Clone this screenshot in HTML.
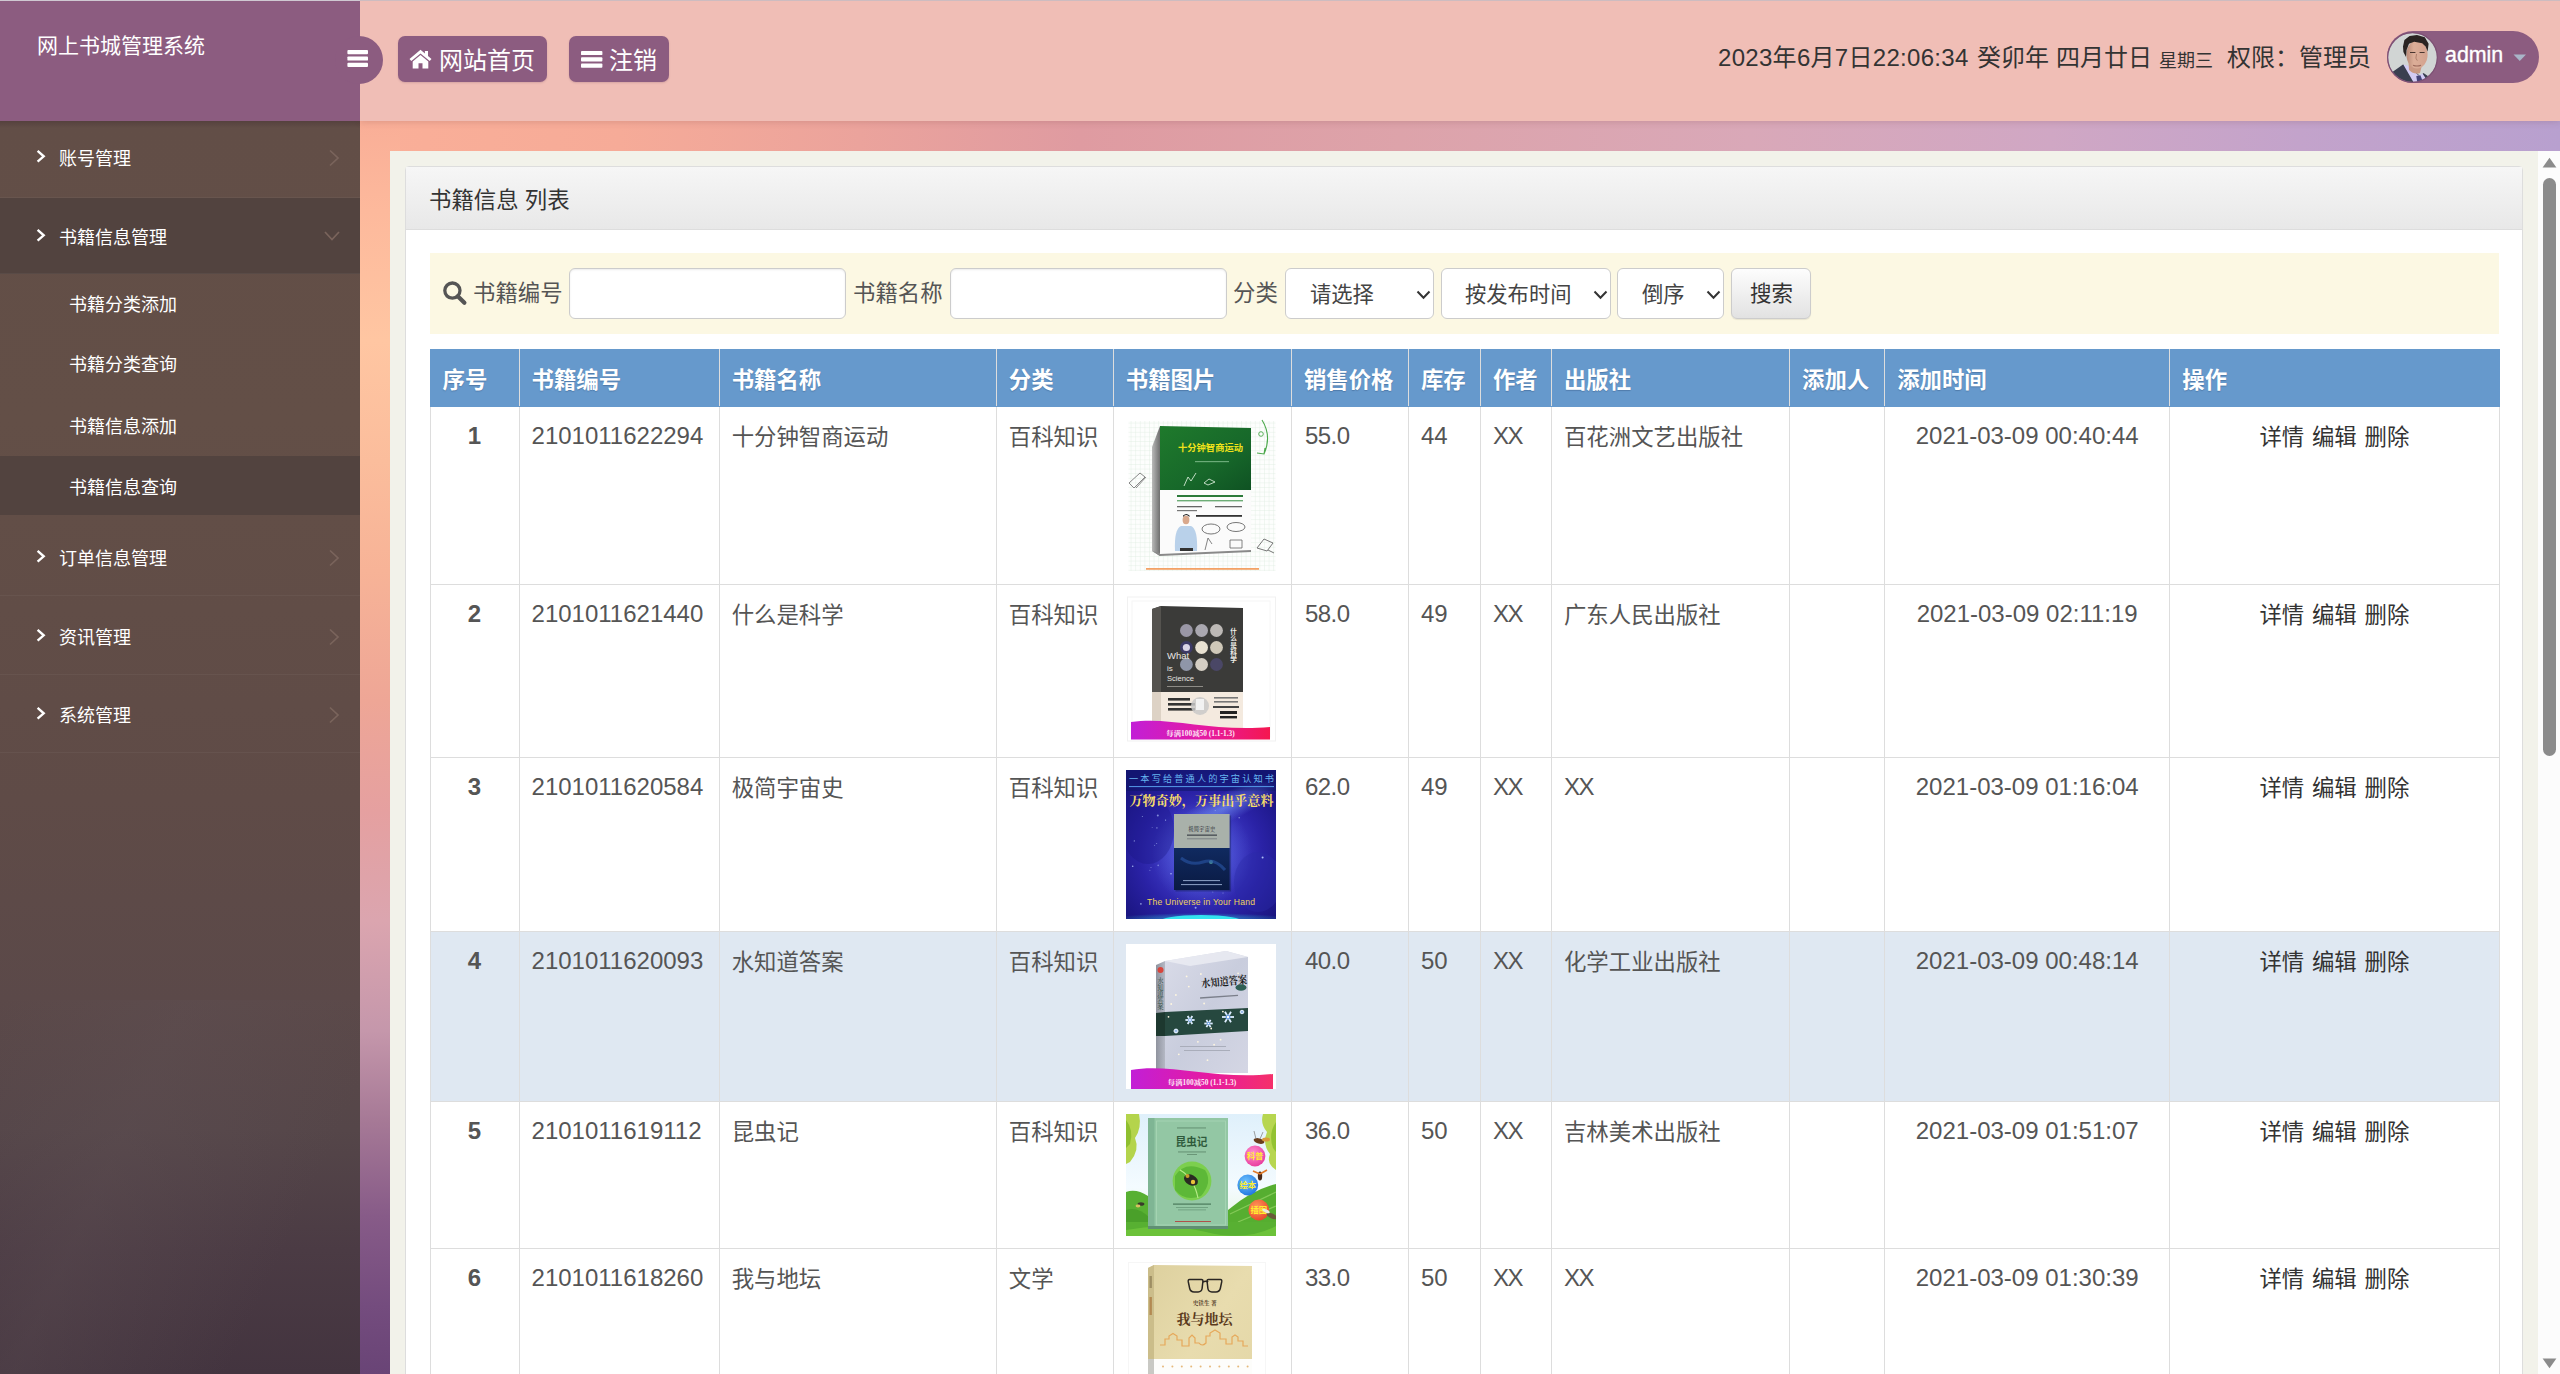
<!DOCTYPE html>
<html lang="zh-CN">
<head>
<meta charset="utf-8">
<title>网上书城管理系统</title>
<style>
*{box-sizing:border-box;margin:0;padding:0}
html,body{width:2560px;height:1374px;overflow:hidden}
body{position:relative;font-family:"Liberation Sans","Noto Sans CJK SC",sans-serif;color:#555;
background:#f4b49c;}
#bg{position:absolute;left:0;top:0;width:2560px;height:1374px;
background:linear-gradient(90deg,#faaf98 360px,#f6ab98 620px,#eba39c 860px,#df9ba1 1080px,#dda3aa 1400px,#d9a8b8 1750px,#d0a7c4 2050px,#c3a3cb 2300px,#b8a0cf 2560px);}
#bgv{position:absolute;left:0;top:121px;width:400px;height:1253px;
background:linear-gradient(180deg,#f9ae97 0px,#fdb99c 90px,#ffc6a2 220px,#fbbd9c 340px,#f7b397 450px,#eea696 580px,#e5a0a0 690px,#dba5af 800px,#c597ab 910px,#a67996 1000px,#875b88 1095px,#744c7e 1185px,#694476 1253px);}
/* sidebar */
#side{position:absolute;left:0;top:0;width:360px;height:1374px;
background:linear-gradient(180deg,#624e47 121px,#634f47 420px,#5f4b47 800px,#5b4949 1000px,#554649 1130px,#4b3b44 1250px,#43343f 1374px);}
#side:after{content:"";position:absolute;left:0;top:1000px;width:360px;height:374px;
background:linear-gradient(115deg,rgba(95,80,84,.0) 0%,rgba(95,80,84,.35) 35%,rgba(60,45,58,0) 75%);}
#brand{position:absolute;left:0;top:0;width:360px;height:121px;background:#8c5c80;color:#fff;font-size:21px;z-index:2}
#brand span{position:absolute;left:37px;top:30px;line-height:32px;white-space:nowrap}
#brandshadow{position:absolute;left:0;top:121px;width:360px;height:7px;background:linear-gradient(180deg,rgba(40,20,30,.22),rgba(40,20,30,0));z-index:2}
.mi{position:absolute;left:0;width:360px;color:#fff;font-size:18px;z-index:1}
.mi .t{position:absolute;left:59px;top:0;white-space:nowrap}
.mi.top{height:77px;border-bottom:1px solid rgba(255,255,255,.045)}
.mi.top .t{top:23px;line-height:26px}
.mi.act{background:#52433f}
.mi.sub .t{left:69px}
.mi svg{position:absolute}
/* header */
#hdr{position:absolute;left:360px;top:0;width:2200px;height:121px;background:#f0beb6;
box-shadow:0 2px 6px rgba(120,60,60,.16)}
#topline{position:absolute;left:0;top:0;width:2560px;height:1px;background:linear-gradient(90deg,#cfc8d2 360px,#cdbcc0 360px);z-index:5}
#tog{position:absolute;left:335px;top:36px;width:48px;height:48px;border-radius:24px;background:#8c5c80;z-index:3}
.btn{position:absolute;top:36px;height:46px;border-radius:7px;background:#8c5c80;color:#fff;font-size:25.6px;z-index:3;
box-shadow:0 1px 2px rgba(90,40,70,.18)}
.btn span{position:absolute;top:7px;line-height:36px;white-space:nowrap}
#htxt{position:absolute;left:1718px;top:38px;line-height:40px;font-size:24px;color:#333;white-space:nowrap;z-index:3}
#htxt small{font-size:18px}
#pill{position:absolute;left:2387px;top:31px;width:152px;height:52px;border-radius:26px;background:#8c5c80;z-index:3;color:#fff;font-size:21.4px}
#pill span{position:absolute;left:58px;top:8px;line-height:32px;-webkit-text-stroke:.35px #fff}
/* content */
#outer{position:absolute;left:390px;top:151px;width:2148px;height:1223px;background:#f2f2ea}
#sbar{position:absolute;left:2538px;top:151px;width:22px;height:1223px;background:#fcfcfc}
#thumb{position:absolute;left:5px;top:27px;width:13px;height:578px;border-radius:6.5px;background:#8b8b8b}
#panel{position:absolute;left:405px;top:166px;width:2118px;height:1240px;background:#fff;border:1px solid #ddd;border-radius:4px 4px 0 0}
#phead{position:absolute;left:0;top:0;width:2116px;height:63px;background:linear-gradient(180deg,#f6f6f6,#e8e8e8);border-bottom:1px solid #ddd;
font-size:22.4px;color:#333}
#phead span{position:absolute;left:23px;top:18px;line-height:32px}
#search{position:absolute;left:430px;top:253px;width:2069px;height:81px;background:#fcf8e3;border-radius:0;font-size:22.4px;color:#555}
#search .lb{position:absolute;top:24.5px;line-height:32px;white-space:nowrap}
.inp{position:absolute;top:15px;height:51px;background:#fff;border:1px solid #ccc;border-radius:6px;box-shadow:inset 0 1px 2px rgba(0,0,0,.075)}
.sel{position:absolute;top:15px;height:51px;background:#fff;border:1px solid #ccc;border-radius:6px;font-size:21.3px;color:#444}
.sel span{position:absolute;top:11px;line-height:30px;white-space:nowrap}
.sel svg{position:absolute;top:19.5px}
#sbtn{position:absolute;left:1301px;top:15px;width:80px;height:50.5px;border:1px solid #ccc;border-radius:6px;
background:linear-gradient(180deg,#fdfdfd,#e2e2e2);font-size:21.5px;color:#333;box-shadow:0 1px 1px rgba(0,0,0,.08)}
#sbtn span{position:absolute;left:18px;top:9px;line-height:32px}
/* table */
table{position:absolute;left:429.5px;top:349px;width:2070px;border-collapse:collapse;table-layout:fixed;font-size:22.4px;background:#fff}
th,td{border:1px solid #ddd;padding:0 0 0 12px;vertical-align:top;text-align:left;white-space:nowrap;overflow:hidden}
th{height:57px;background:#6699cc;color:#fff;font-weight:bold;line-height:32px;padding-top:15px;border-top-color:#6699cc;border-bottom-color:#6699cc;
text-shadow:0 1px 1px rgba(40,70,110,.35);font-size:22.4px}
th:first-child{border-left-color:#6699cc}th:last-child{border-right-color:#6699cc}
td{line-height:32px;padding-top:14.5px;color:#555}
td.c{text-align:center;padding-left:0}
td.b{font-weight:bold}
td.n{font-size:24px;padding-top:13px}
td.op{color:#333;text-align:center;padding-left:0;word-spacing:1.6px}
td.x{letter-spacing:-1.4px}
td.p{letter-spacing:-.5px;padding-left:13px}
tr.hl td{background:#dfe8f2}
td.im{padding-top:0;position:relative}
.cv{position:absolute;left:12.7px;display:block}
</style>
</head>
<body>
<div id="bg"></div>
<div id="bgv"></div>
<div id="topline"></div>

<!-- SIDEBAR -->
<div id="side"></div>
<div id="brand"><span>网上书城管理系统</span></div>
<div id="brandshadow"></div>
<div class="mi top" style="top:121px;height:77px"><span class="t" style="top:24.5px">账号管理</span><svg style="left:35px;top:26px" width="14" height="18" viewBox="0 0 14 18"><polyline points="2.6,3.9 8.7,9.3 2.6,14.7" fill="none" stroke="#fff" stroke-width="2.4" stroke-linejoin="miter"/></svg><svg style="left:326px;top:27px" width="16" height="20" viewBox="0 0 16 20"><polyline points="4,2.5 12,10 4,17.5" fill="none" stroke="#7a645c" stroke-width="1.7"/></svg></div>
<div class="mi top act" style="top:198px;height:76px"><span class="t" style="top:26.5px">书籍信息管理</span><svg style="left:35px;top:28px" width="14" height="18" viewBox="0 0 14 18"><polyline points="2.6,3.9 8.7,9.3 2.6,14.7" fill="none" stroke="#fff" stroke-width="2.4" stroke-linejoin="miter"/></svg><svg style="left:322px;top:31px" width="20" height="14" viewBox="0 0 20 14"><polyline points="3,3 10,10.5 17,3" fill="none" stroke="#7a645c" stroke-width="1.7"/></svg></div>
<div class="mi top" style="top:517px;height:79px"><span class="t" style="top:28.5px">订单信息管理</span><svg style="left:35px;top:30px" width="14" height="18" viewBox="0 0 14 18"><polyline points="2.6,3.9 8.7,9.3 2.6,14.7" fill="none" stroke="#fff" stroke-width="2.4" stroke-linejoin="miter"/></svg><svg style="left:326px;top:31px" width="16" height="20" viewBox="0 0 16 20"><polyline points="4,2.5 12,10 4,17.5" fill="none" stroke="#7a645c" stroke-width="1.7"/></svg></div>
<div class="mi top" style="top:596px;height:79px"><span class="t" style="top:28.5px">资讯管理</span><svg style="left:35px;top:30px" width="14" height="18" viewBox="0 0 14 18"><polyline points="2.6,3.9 8.7,9.3 2.6,14.7" fill="none" stroke="#fff" stroke-width="2.4" stroke-linejoin="miter"/></svg><svg style="left:326px;top:31px" width="16" height="20" viewBox="0 0 16 20"><polyline points="4,2.5 12,10 4,17.5" fill="none" stroke="#7a645c" stroke-width="1.7"/></svg></div>
<div class="mi top" style="top:675px;height:78px"><span class="t" style="top:27.5px">系统管理</span><svg style="left:35px;top:29px" width="14" height="18" viewBox="0 0 14 18"><polyline points="2.6,3.9 8.7,9.3 2.6,14.7" fill="none" stroke="#fff" stroke-width="2.4" stroke-linejoin="miter"/></svg><svg style="left:326px;top:30px" width="16" height="20" viewBox="0 0 16 20"><polyline points="4,2.5 12,10 4,17.5" fill="none" stroke="#7a645c" stroke-width="1.7"/></svg></div>
<div class="mi sub" style="top:274px;height:61px"><span class="t" style="top:17.5px;line-height:26px">书籍分类添加</span></div>
<div class="mi sub" style="top:335px;height:61px"><span class="t" style="top:16.5px;line-height:26px">书籍分类查询</span></div>
<div class="mi sub" style="top:396px;height:61px"><span class="t" style="top:17.5px;line-height:26px">书籍信息添加</span></div>
<div class="mi sub act" style="top:456px;height:59px"><span class="t" style="top:18.5px;line-height:26px">书籍信息查询</span></div>

<!-- HEADER -->
<div id="hdr"></div>

<div id="tog"><svg style="position:absolute;left:12px;top:14px" width="22" height="20" viewBox="0 0 22 20"><g fill="#fff"><rect x="0.4" y="0" width="20.6" height="4.2" rx=".9"/><rect x="0.4" y="6.4" width="20.6" height="4.2" rx=".9"/><rect x="0.4" y="12.8" width="20.6" height="4.2" rx=".9"/></g></svg></div>
<div class="btn" style="left:398px;width:149px"><svg style="position:absolute;left:11px;top:13px" width="23" height="20" viewBox="0 0 23 20"><path fill="#fff" d="M11.5 0.7 L0.5 10 L2.3 12.1 L11.5 4.4 L20.7 12.1 L22.5 10 L19 7 V1.9 H15.9 V4.4 Z M3.7 12.6 L11.5 6 L19.3 12.6 V19.4 H13.5 V14.2 H9.5 V19.4 H3.7 Z"/></svg><span style="left:41px;font-size:24px">网站首页</span></div>
<div class="btn" style="left:569px;width:100px"><svg style="position:absolute;left:11.5px;top:14.5px" width="22" height="18" viewBox="0 0 22 18"><g fill="#fff"><rect x="0" y="0" width="21.4" height="4.1" rx=".9"/><rect x="0" y="6.3" width="21.4" height="4.1" rx=".9"/><rect x="0" y="12.6" width="21.4" height="4.1" rx=".9"/></g></svg><span style="left:40px;font-size:24px">注销</span></div>
<div id="htxt"><span style="position:absolute;left:0;top:0;letter-spacing:.3px">2023年6月7日22:06:34</span><span style="position:absolute;left:259px;top:0">癸卯年</span><span style="position:absolute;left:338px;top:0">四月廿日</span><small style="position:absolute;left:441px;top:3px">星期三</small><span style="position:absolute;left:509px;top:0">权限：管理员</span></div>
<div id="pill"><svg style="position:absolute;left:0;top:0.5px" width="51" height="51" viewBox="0 0 51 51"><defs><clipPath id="avc"><circle cx="25.5" cy="25.5" r="24.6"/></clipPath><linearGradient id="avf" x1="0" x2="1"><stop offset="0" stop-color="#b98a78"/><stop offset=".35" stop-color="#dcae98"/><stop offset="1" stop-color="#d3a28e"/></linearGradient></defs><g clip-path="url(#avc)"><rect width="51" height="51" fill="#d1d5d4"/><path d="M4 41 L16 32.5 L24 36 L33 44 L36.5 41 L43 45.5 L40 52 H2 Z" fill="#3a3f50"/><path d="M16.3 32.4 L22 34 L31.5 43.5 L35.5 41.5 L38.5 46 L36 52 H27.5 Z" fill="#d2cbf4"/><path d="M29.3 44 L33.4 43.2 L36 50 L30.5 52 Z" fill="#46447a"/><path d="M21.5 30 L22 38 Q27 43 33 41 L35 33 Z" fill="#c99984"/><ellipse cx="30" cy="22.6" rx="10.6" ry="14" fill="url(#avf)"/><path d="M16 14.5 L17.4 8 L22.6 4 L30 3 L37.8 5.2 L41.6 11.8 L40.6 19.5 L38.6 14.5 L35.2 11.2 L27.2 9.8 L22 11.8 L19.6 18 L19 25 L16.4 20 Z" fill="#2a2422"/><path d="M23 20.5 h5.4 M32.6 20.5 h5" stroke="#4a3630" stroke-width="1.2"/><path d="M29.5 22 q-1.6 5 .8 6.6" stroke="#b07f6c" stroke-width="1" fill="none"/><path d="M26 33.2 q4 1.6 8 0" stroke="#9c6a5c" stroke-width="1.1" fill="none"/></g><circle cx="25.5" cy="25.5" r="24.8" fill="none" stroke="#7d5074" stroke-width="1.2"/></svg><span>admin</span><svg style="position:absolute;left:126px;top:23px" width="14" height="8" viewBox="0 0 14 8"><path d="M0.5 0.5 H13 L6.75 7 Z" fill="#a9b5c8"/></svg></div>


<!-- CONTENT -->
<div id="outer"></div>
<div id="sbar"><div id="thumb"></div><svg style="position:absolute;left:4px;top:6px" width="15" height="11" viewBox="0 0 15 11"><path d="M7.5 0.8 L14.4 10.6 H0.6 Z" fill="#8b8b8b"/></svg><svg style="position:absolute;left:4px;top:1207px" width="15" height="11" viewBox="0 0 15 11"><path d="M7.5 10.2 L14.4 0.4 H0.6 Z" fill="#8b8b8b"/></svg></div>
<div id="panel"><div id="phead"><span>书籍信息 列表</span></div></div>

<div id="search">
<svg style="position:absolute;left:12px;top:27px" width="26" height="26" viewBox="0 0 26 26"><circle cx="10.4" cy="10.6" r="7.6" fill="none" stroke="#555" stroke-width="3.3"/><path d="M15.8 16.2 L22.4 22.8" stroke="#555" stroke-width="4.2" stroke-linecap="round"/></svg>
<span class="lb" style="left:43px">书籍编号</span>
<div class="inp" style="left:139px;width:277px"></div>
<span class="lb" style="left:423px">书籍名称</span>
<div class="inp" style="left:520px;width:277px"></div>
<span class="lb" style="left:803px">分类</span>
<div class="sel" style="left:855px;width:149px"><span style="left:24px">请选择</span><svg style="left:130px" width="15" height="12" viewBox="0 0 15 12"><polyline points="1.5,2.5 7.5,8.8 13.5,2.5" fill="none" stroke="#333" stroke-width="2"/></svg></div>
<div class="sel" style="left:1011px;width:170px"><span style="left:23px">按发布时间</span><svg style="left:151px" width="15" height="12" viewBox="0 0 15 12"><polyline points="1.5,2.5 7.5,8.8 13.5,2.5" fill="none" stroke="#333" stroke-width="2"/></svg></div>
<div class="sel" style="left:1187px;width:107px"><span style="left:24px">倒序</span><svg style="left:88px" width="15" height="12" viewBox="0 0 15 12"><polyline points="1.5,2.5 7.5,8.8 13.5,2.5" fill="none" stroke="#333" stroke-width="2"/></svg></div>
<div id="sbtn"><span>搜索</span></div>
</div>

<table><colgroup><col style="width:89px"><col style="width:200px"><col style="width:277px"><col style="width:117px"><col style="width:178px"><col style="width:117px"><col style="width:72px"><col style="width:71px"><col style="width:238px"><col style="width:95px"><col style="width:285px"><col style="width:329px"></colgroup>
<thead><tr><th>序号</th><th>书籍编号</th><th>书籍名称</th><th>分类</th><th>书籍图片</th><th>销售价格</th><th>库存</th><th>作者</th><th>出版社</th><th>添加人</th><th>添加时间</th><th>操作</th></tr></thead><tbody>
<tr style="height:178px"><td class="c b n">1</td><td class="n">2101011622294</td><td>十分钟智商运动</td><td>百科知识</td><td class="im"><!--IMG1--><svg class="cv" style="top:11px" width="150" height="154" viewBox="0 0 150 154" ><defs><pattern id="gr1" width="4.6" height="4.6" patternUnits="userSpaceOnUse"><path d="M4.6 0H0V4.6" fill="none" stroke="#dfeee2" stroke-width=".8"/></pattern><linearGradient id="g1c" x1="0" y1="0" x2="1" y2="1"><stop offset="0" stop-color="#1f7a2c"/><stop offset=".6" stop-color="#17682a"/><stop offset="1" stop-color="#0f5223"/></linearGradient><linearGradient id="g1s" x1="0" x2="1"><stop offset="0" stop-color="#b9b9b9"/><stop offset="1" stop-color="#6f6f6f"/></linearGradient></defs><rect x="2.5" y="3" width="147" height="150" fill="#fdfefd"/><rect x="2.5" y="3" width="147" height="150" fill="url(#gr1)"/><polygon points="26.0,29.0 34.0,8.0 34.0,138.0 26.0,133.0" fill="url(#g1s)"/><polygon points="26.0,133.0 34.0,138.0 125.0,134.0 125.0,131.0 34.0,135.0" fill="#8a8a8a"/><polygon points="34.0,8.0 125.0,10.0 125.0,72.0 34.0,72.0" fill="url(#g1c)"/><polygon points="34.0,72.0 125.0,72.0 125.0,132.0 34.0,136.0" fill="#fbfbfb"/><text x="52" y="33" font-size="9.6" font-weight="bold" fill="#f0e21a" font-family="Liberation Sans, Noto Sans CJK SC, sans-serif" textLength="65" lengthAdjust="spacingAndGlyphs">十分钟智商运动</text><rect x="69" y="43" width="34" height="1.2" fill="#8fc79a" opacity=".7"/><path d="M58.0,68.0 l4,-9 l3,4 l5,-8 m8,10 l5,-4 l6,3 l-7,3 z" fill="none" stroke="#dcefdc" stroke-width="1" opacity=".85"/><rect x="51" y="77" width="66" height="2" fill="#2c7a3a"/><rect x="51" y="82" width="66" height="1.4" fill="#4a9a55" opacity=".8"/><rect x="51" y="88" width="25" height="1.3" fill="#666"/><rect x="89" y="88" width="27" height="1.3" fill="#666"/><rect x="51" y="92" width="20" height="1.2" fill="#777"/><rect x="70" y="97" width="46" height="1.8" fill="#333"/><ellipse cx="60" cy="102" rx="3.4" ry="4.2" fill="#d9a88c"/><path d="M57.0,99.0 q3,-4 6.5,0 v-1.5 q-3,-3 -6.5,0z" fill="#222"/><path d="M49.0,133.0 q-1,-22 6,-25 h10 q7,3 6,25 z" fill="#b9d1ea"/><rect x="54" y="130" width="13" height="3" fill="#333"/><ellipse cx="85" cy="111" rx="9" ry="5" fill="none" stroke="#555" stroke-width=".8"/><ellipse cx="110" cy="109" rx="9" ry="4.5" fill="none" stroke="#555" stroke-width=".8"/><path d="M79.0,132.0 l3,-12 l4,6 m18,4 h12 v-8 h-12z" fill="none" stroke="#666" stroke-width=".8"/><path d="M3.0,65.0 l11,-10 l5,4 l-11,11 z M10.0,70.0 l10,-11" fill="none" stroke="#888" stroke-width="1"/><path d="M131.0,130.0 l7,-9 l9,4 l-6,8 z M142.0,132.0 l6,3" fill="none" stroke="#777" stroke-width="1"/><path d="M136.0,2.0 q10,16 2,34 l-7,-1 m7,1 l1,-6" fill="none" stroke="#4aa84a" stroke-width="1.1"/><circle cx="135" cy="16" r="2.3" fill="none" stroke="#4aa84a" stroke-width=".9"/><rect x="20" y="150" width="113" height="1.8" fill="#f3a266"/></svg><!--/IMG1--></td><td class="n p">55.0</td><td class="n">44</td><td class="n x">XX</td><td>百花洲文艺出版社</td><td></td><td class="c n">2021-03-09 00:40:44</td><td class="op">详情 编辑 删除</td></tr>
<tr style="height:173px"><td class="c b n">2</td><td class="n">2101011621440</td><td>什么是科学</td><td>百科知识</td><td class="im"><!--IMG2--><svg class="cv" style="top:11px" width="150" height="146" viewBox="0 0 150 146" ><defs><linearGradient id="g2b" x1="0" x2="1"><stop offset="0" stop-color="#c21fd6"/><stop offset=".55" stop-color="#e61aa0"/><stop offset="1" stop-color="#f5174f"/></linearGradient></defs><rect x="1" y="0.5" width="149" height="145" fill="#fff"/><rect x="1.5" y="1" width="148" height="144" fill="none" stroke="#f1f1f1" stroke-width="1"/><rect x="6" y="5" width="138" height="136" fill="none" stroke="#f6f6f6" stroke-width="1"/><polygon points="26.0,13.0 35.0,10.0 117.0,12.0 117.0,96.0 26.0,96.0" fill="#3b3b39"/><polygon points="26.0,13.0 35.0,10.0 35.0,96.0 26.0,96.0" fill="#55534f"/><rect x="26" y="96" width="91" height="36" fill="#f4eadf"/><rect x="26" y="96" width="9" height="36" fill="#ddd2c5"/><circle cx="60.4" cy="34.5" r="6.4" fill="#9a97a6"/><circle cx="75.6" cy="34.5" r="6.4" fill="#aaa8b0"/><circle cx="90.5" cy="34.5" r="6.4" fill="#bdb9b6"/><circle cx="60.4" cy="51.5" r="6.4" fill="#3d3a66"/><circle cx="75.6" cy="51.5" r="6.4" fill="#e9e2d2"/><circle cx="90.5" cy="51.5" r="6.4" fill="#cfc8b8"/><circle cx="60.4" cy="68.5" r="6.4" fill="#8f96a8"/><circle cx="75.6" cy="68.5" r="6.4" fill="#d5cfc4"/><circle cx="90.5" cy="68.5" r="6.4" fill="#4a4766"/><circle cx="60.4" cy="51.5" r="3.6" fill="#d9d4e6"/><text x="41" y="63" font-size="9.5" fill="#e8e6e2" font-family="Liberation Sans, Noto Sans CJK SC, sans-serif">What</text><text x="41" y="75" font-size="8" fill="#e8e6e2" font-family="Liberation Sans, Noto Sans CJK SC, sans-serif">is</text><text x="41" y="84.5" font-size="7.6" fill="#e8e6e2" font-family="Liberation Sans, Noto Sans CJK SC, sans-serif">Science</text><text font-size="6.6" font-weight="bold" fill="#f0eee8" font-family="Liberation Sans, Noto Sans CJK SC, sans-serif"><tspan x="104.3" y="38.0">什</tspan><tspan x="104.3" y="45.0">么</tspan><tspan x="104.3" y="52.0">是</tspan><tspan x="104.3" y="59.0">科</tspan><tspan x="104.3" y="66.0">学</tspan></text><rect x="41" y="90" width="36" height="1" fill="#8d8b86"/><rect x="42" y="102" width="22" height="2.6" fill="#333"/><rect x="42" y="107" width="27" height="2.6" fill="#333"/><rect x="42" y="112" width="27" height="2.6" fill="#333"/><circle cx="74" cy="110" r="9" fill="#c9c9c9" opacity=".85"/><rect x="70" y="103" width="8" height="11" fill="#f2f2f2"/><rect x="88" y="101" width="24" height="1.6" fill="#777"/><rect x="88" y="105" width="24" height="1.6" fill="#777"/><rect x="87" y="110" width="26" height="2" fill="#444"/><rect x="94" y="115" width="17" height="3" fill="#222"/><rect x="94" y="120" width="17" height="2.4" fill="#222"/><path d="M5.0,126.0 C44.0,120.0 84.0,136.0 144.0,131.0 L144.0,143.5 L5.0,143.5 Z" fill="url(#g2b)"/><text x="74.5" y="140.29999999999995" font-size="7.4" font-weight="bold" fill="#ffe9f6" text-anchor="middle" font-family="Liberation Serif, Noto Serif CJK SC, serif">每满100减50 (1.1-1.3)</text></svg><!--/IMG2--></td><td class="n p">58.0</td><td class="n">49</td><td class="n x">XX</td><td>广东人民出版社</td><td></td><td class="c n">2021-03-09 02:11:19</td><td class="op">详情 编辑 删除</td></tr>
<tr style="height:174px"><td class="c b n">3</td><td class="n">2101011620584</td><td>极简宇宙史</td><td>百科知识</td><td class="im"><!--IMG3--><svg class="cv" style="top:12px" width="150" height="149" viewBox="0 0 150 149" ><defs><radialGradient id="g3a" cx=".5" cy=".56" r=".66"><stop offset="0" stop-color="#5560de"/><stop offset=".3" stop-color="#3f3cc8"/><stop offset=".62" stop-color="#2a22a6"/><stop offset="1" stop-color="#19147e"/></radialGradient><linearGradient id="g3b" x1="0" y1="0" x2="0" y2="1"><stop offset="0" stop-color="#102a60"/><stop offset="1" stop-color="#0a1a42"/></linearGradient><radialGradient id="g3c" cx=".5" cy="1" r=".6"><stop offset="0" stop-color="#35e6f0"/><stop offset="1" stop-color="#35e6f0" stop-opacity="0"/></radialGradient><radialGradient id="g3d" cx=".5" cy=".5" r=".5"><stop offset="0" stop-color="#6f8cf0" stop-opacity=".75"/><stop offset="1" stop-color="#6f8cf0" stop-opacity="0"/></radialGradient></defs><rect width="150" height="149" fill="url(#g3a)"/><rect width="150" height="21" fill="#0f1668" opacity=".55"/><ellipse cx="98" cy="38" rx="58" ry="15" fill="url(#g3d)" transform="rotate(-24 98 38)"/><ellipse cx="76" cy="84" rx="50" ry="52" fill="url(#g3d)" opacity=".7"/><ellipse cx="22" cy="60" rx="26" ry="34" fill="#1a1684" opacity=".35"/><ellipse cx="132" cy="112" rx="24" ry="30" fill="#2b2aa8" opacity=".4"/><circle cx="37.0" cy="34.0" r="1.0" fill="#bcd0ff" opacity="0.64"/><circle cx="16.0" cy="24.3" r="0.8" fill="#bcd0ff" opacity="0.80"/><circle cx="113.2" cy="47.7" r="0.8" fill="#bcd0ff" opacity="0.54"/><circle cx="27.9" cy="34.3" r="0.6" fill="#bcd0ff" opacity="0.87"/><circle cx="6.7" cy="96.3" r="0.8" fill="#bcd0ff" opacity="0.80"/><circle cx="30.9" cy="57.9" r="0.8" fill="#bcd0ff" opacity="0.44"/><circle cx="90.2" cy="99.9" r="0.6" fill="#bcd0ff" opacity="0.49"/><circle cx="71.2" cy="32.4" r="0.8" fill="#bcd0ff" opacity="0.40"/><circle cx="45.0" cy="103.8" r="0.8" fill="#bcd0ff" opacity="0.82"/><circle cx="76.2" cy="70.0" r="0.8" fill="#bcd0ff" opacity="0.62"/><circle cx="26.2" cy="57.4" r="0.5" fill="#bcd0ff" opacity="0.44"/><circle cx="69.6" cy="137.7" r="1.0" fill="#bcd0ff" opacity="0.75"/><circle cx="23.9" cy="100.2" r="0.5" fill="#bcd0ff" opacity="0.61"/><circle cx="32.2" cy="95.4" r="0.8" fill="#bcd0ff" opacity="0.49"/><circle cx="65.8" cy="90.3" r="0.6" fill="#bcd0ff" opacity="0.85"/><circle cx="17.5" cy="29.1" r="0.6" fill="#bcd0ff" opacity="0.54"/><circle cx="86.8" cy="122.0" r="0.5" fill="#bcd0ff" opacity="0.57"/><circle cx="28.6" cy="75.2" r="0.5" fill="#bcd0ff" opacity="0.58"/><circle cx="14.9" cy="133.9" r="0.8" fill="#bcd0ff" opacity="0.77"/><circle cx="141.2" cy="24.1" r="0.8" fill="#bcd0ff" opacity="0.56"/><circle cx="25.0" cy="97.6" r="0.5" fill="#bcd0ff" opacity="0.55"/><circle cx="30.6" cy="73.5" r="0.6" fill="#bcd0ff" opacity="0.53"/><circle cx="89.2" cy="40.4" r="0.5" fill="#bcd0ff" opacity="0.58"/><circle cx="68.5" cy="64.4" r="0.8" fill="#bcd0ff" opacity="0.90"/><circle cx="85.3" cy="73.0" r="0.6" fill="#bcd0ff" opacity="0.61"/><circle cx="32.9" cy="28.9" r="0.5" fill="#bcd0ff" opacity="0.77"/><circle cx="88.8" cy="134.6" r="0.5" fill="#bcd0ff" opacity="0.67"/><circle cx="86.9" cy="59.3" r="0.5" fill="#bcd0ff" opacity="0.46"/><circle cx="79.2" cy="111.8" r="1.0" fill="#bcd0ff" opacity="0.73"/><circle cx="31.8" cy="45.4" r="1.0" fill="#bcd0ff" opacity="0.61"/><circle cx="8.3" cy="70.9" r="0.6" fill="#bcd0ff" opacity="0.72"/><circle cx="64.6" cy="47.0" r="0.6" fill="#bcd0ff" opacity="0.42"/><circle cx="39.6" cy="50.1" r="0.6" fill="#bcd0ff" opacity="0.79"/><circle cx="63.1" cy="52.4" r="0.8" fill="#bcd0ff" opacity="0.43"/><circle cx="136.6" cy="87.6" r="1.0" fill="#bcd0ff" opacity="0.88"/><circle cx="97.0" cy="123.0" r="0.5" fill="#bcd0ff" opacity="0.65"/><circle cx="16.4" cy="46.5" r="0.6" fill="#bcd0ff" opacity="0.57"/><circle cx="97.6" cy="114.7" r="0.8" fill="#bcd0ff" opacity="0.81"/><text x="3" y="11.6" font-size="9.2" fill="#67b6f0" font-family="Liberation Sans, Noto Sans CJK SC, sans-serif" textLength="145" lengthAdjust="spacing">一本写给普通人的宇宙认知书</text><rect x="3" y="16" width="145" height="1.1" fill="#4f8fe0"/><text x="3.5" y="34.6" font-size="12.6" font-weight="bold" fill="#f6dc6a" font-family="Liberation Serif, Noto Serif CJK SC, serif" textLength="144" lengthAdjust="spacingAndGlyphs">万物奇妙，万事出乎意料</text><rect x="48" y="44" width="55.6" height="76" fill="#0a1738" opacity=".35" transform="translate(1.5,1.5)"/><rect x="48" y="44" width="55.6" height="34" fill="#a9b1aa"/><rect x="48" y="78" width="55.6" height="42" fill="url(#g3b)"/><text x="75.8" y="60.5" font-size="5.4" fill="#2c3038" text-anchor="middle" font-family="Liberation Serif, Noto Serif CJK SC, serif">极简宇宙史</text><rect x="61" y="64.5" width="30" height="1.3" fill="#454a50"/><rect x="61" y="68.5" width="30" height=".7" fill="#6a7076"/><circle cx="85" cy="92" r="2" fill="#5fb9b0" opacity=".7"/><path d="M55 88 q10 8 22 4 t22 8" fill="none" stroke="#2a57a6" stroke-width="3" opacity=".6"/><rect x="57" y="110" width="37" height="1.1" fill="#9fb4d8" opacity=".8"/><rect x="55" y="114" width="41" height="1.1" fill="#9fb4d8" opacity=".8"/><text x="75" y="135.2" font-size="8.6" fill="#f0d45a" text-anchor="middle" font-family="Liberation Sans, Noto Sans CJK SC, sans-serif" textLength="108" lengthAdjust="spacing">The Universe in Your Hand</text><ellipse cx="75" cy="153" rx="44" ry="8" fill="#33e0ee"/><rect y="139" width="150" height="10" fill="url(#g3c)" opacity=".6"/></svg><!--/IMG3--></td><td class="n p">62.0</td><td class="n">49</td><td class="n x">XX</td><td class="n x">XX</td><td></td><td class="c n">2021-03-09 01:16:04</td><td class="op">详情 编辑 删除</td></tr>
<tr class="hl" style="height:170px"><td class="c b n">4</td><td class="n">2101011620093</td><td>水知道答案</td><td>百科知识</td><td class="im"><!--IMG4--><svg class="cv" style="top:12px" width="150" height="145" viewBox="0 0 150 145" ><defs><linearGradient id="g4a" x1="0" y1="0" x2="1" y2="1"><stop offset="0" stop-color="#d9dbe8"/><stop offset=".5" stop-color="#c9cddd"/><stop offset="1" stop-color="#d4d6e4"/></linearGradient><linearGradient id="g4s" x1="0" x2="1"><stop offset="0" stop-color="#8f939e"/><stop offset="1" stop-color="#b4b8c4"/></linearGradient></defs><rect width="150" height="145" fill="#fff"/><polygon points="39.0,17.0 100.0,7.0 122.0,13.0 122.0,129.0 39.0,129.0" fill="url(#g4a)"/><polygon points="39.0,17.0 100.0,7.0 122.0,13.0 64.0,22.0" fill="#eceef4" opacity=".8"/><polygon points="30.0,21.0 39.0,17.0 39.0,129.0 30.0,129.0" fill="url(#g4s)"/><circle cx="34.5" cy="26" r="3" fill="#d8453c"/><text font-size="6.4" fill="#2c4a40" font-family="Liberation Serif, Noto Serif CJK SC, serif"><tspan x="31.3" y="39.0">水</tspan><tspan x="31.3" y="45.6">知</tspan><tspan x="31.3" y="52.2">道</tspan><tspan x="31.3" y="58.8">答</tspan><tspan x="31.3" y="65.4">案</tspan></text><polygon points="39.0,68.0 122.0,64.0 122.0,87.0 39.0,92.0" fill="#26483f"/><polygon points="30.0,69.0 39.0,68.0 39.0,92.0 30.0,92.0" fill="#1d382f"/><g transform="translate(64.0,76.0)" fill="#dfeeff"><rect x="-4.6" y="-0.9" width="9.2" height="1.8" transform="rotate(0)"/><rect x="-4.6" y="-0.9" width="9.2" height="1.8" transform="rotate(60)"/><rect x="-4.6" y="-0.9" width="9.2" height="1.8" transform="rotate(120)"/><circle r="1.9" fill="#6f9fe0"/><circle r="0.9" fill="#fff"/></g><g transform="translate(82.5,79.5)" fill="#dfeeff"><rect x="-4.2" y="-0.9" width="8.4" height="1.8" transform="rotate(0)"/><rect x="-4.2" y="-0.9" width="8.4" height="1.8" transform="rotate(60)"/><rect x="-4.2" y="-0.9" width="8.4" height="1.8" transform="rotate(120)"/><circle r="1.8" fill="#6f9fe0"/><circle r="0.8" fill="#fff"/></g><g transform="translate(102.0,73.0)" fill="#dfeeff"><rect x="-6" y="-0.9" width="12" height="1.8" transform="rotate(0)"/><rect x="-6" y="-0.9" width="12" height="1.8" transform="rotate(60)"/><rect x="-6" y="-0.9" width="12" height="1.8" transform="rotate(120)"/><circle r="2.5" fill="#6f9fe0"/><circle r="1.2" fill="#fff"/></g><g transform="translate(50.0,87.0)" fill="#dfeeff"><rect x="-2.4" y="-0.9" width="4.8" height="1.8" transform="rotate(0)"/><rect x="-2.4" y="-0.9" width="4.8" height="1.8" transform="rotate(60)"/><rect x="-2.4" y="-0.9" width="4.8" height="1.8" transform="rotate(120)"/><circle r="1.0" fill="#6f9fe0"/><circle r="0.5" fill="#fff"/></g><g transform="translate(116.0,68.0)" fill="#dfeeff"><rect x="-2.2" y="-0.9" width="4.4" height="1.8" transform="rotate(0)"/><rect x="-2.2" y="-0.9" width="4.4" height="1.8" transform="rotate(60)"/><rect x="-2.2" y="-0.9" width="4.4" height="1.8" transform="rotate(120)"/><circle r="0.9" fill="#6f9fe0"/><circle r="0.4" fill="#fff"/></g><text x="75" y="41.5" font-size="11" font-weight="bold" fill="#1c1c1c" font-family="Liberation Serif, Noto Serif CJK SC, serif" textLength="46" lengthAdjust="spacingAndGlyphs" transform="rotate(-5 98 36)">水知道答案</text><ellipse cx="115" cy="43.5" rx="5.5" ry="3.2" fill="#2f5f55"/><rect x="74" y="52" width="38" height="1.4" fill="#7b7f8a" transform="rotate(-4 93 52)"/><circle cx="78.1" cy="59.5" r=".9" fill="#fff7e0"/><circle cx="52.8" cy="110.3" r=".9" fill="#fff7e0"/><circle cx="42.5" cy="72.8" r=".9" fill="#fff7e0"/><circle cx="112.1" cy="29.3" r=".9" fill="#fff7e0"/><circle cx="85.2" cy="84.5" r=".9" fill="#fff7e0"/><circle cx="45.2" cy="60.0" r=".9" fill="#fff7e0"/><circle cx="96.9" cy="67.6" r=".9" fill="#fff7e0"/><circle cx="98.6" cy="37.2" r=".9" fill="#fff7e0"/><circle cx="60.6" cy="32.4" r=".9" fill="#fff7e0"/><circle cx="81.5" cy="116.2" r=".9" fill="#fff7e0"/><circle cx="88.1" cy="100.7" r=".9" fill="#fff7e0"/><circle cx="71.9" cy="97.8" r=".9" fill="#fff7e0"/><circle cx="49.9" cy="51.0" r=".9" fill="#fff7e0"/><circle cx="94.6" cy="95.7" r=".9" fill="#fff7e0"/><circle cx="74.9" cy="30.0" r=".9" fill="#fff7e0"/><circle cx="62.8" cy="42.6" r=".9" fill="#fff7e0"/><rect x="54" y="102" width="46" height="1" fill="#a9adba"/><rect x="58" y="106" width="46" height="1" fill="#a9adba"/><defs><linearGradient id="g4b" x1="0" x2="1"><stop offset="0" stop-color="#c21fd6"/><stop offset=".55" stop-color="#e61aa0"/><stop offset="1" stop-color="#f5306a"/></linearGradient></defs><path d="M5.0,126.0 C44.0,119.0 89.0,136.0 147.0,130.0 L147.0,145.0 L5.0,145.0 Z" fill="url(#g4b)"/><text x="76" y="141.4000000000001" font-size="7.4" font-weight="bold" fill="#ffe9f6" text-anchor="middle" font-family="Liberation Serif, Noto Serif CJK SC, serif">每满100减50 (1.1-1.3)</text></svg><!--/IMG4--></td><td class="n p">40.0</td><td class="n">50</td><td class="n x">XX</td><td>化学工业出版社</td><td></td><td class="c n">2021-03-09 00:48:14</td><td class="op">详情 编辑 删除</td></tr>
<tr style="height:147px"><td class="c b n">5</td><td class="n">2101011619112</td><td>昆虫记</td><td>百科知识</td><td class="im"><!--IMG5--><svg class="cv" style="top:12px" width="150" height="122" viewBox="0 0 150 122" ><defs><linearGradient id="g5s" x1="0" y1="0" x2="0" y2="1"><stop offset="0" stop-color="#dff0fb"/><stop offset=".6" stop-color="#f4fbff"/><stop offset="1" stop-color="#e6f5d8"/></linearGradient><radialGradient id="g5p" cx=".4" cy=".35" r=".7"><stop offset="0" stop-color="#ff8fd0"/><stop offset="1" stop-color="#e83a9c"/></radialGradient><radialGradient id="g5bl" cx=".4" cy=".35" r=".7"><stop offset="0" stop-color="#6fc4ff"/><stop offset="1" stop-color="#1f74e0"/></radialGradient><radialGradient id="g5r" cx=".4" cy=".35" r=".7"><stop offset="0" stop-color="#ff9a5a"/><stop offset="1" stop-color="#e8452a"/></radialGradient></defs><rect width="150" height="122" fill="url(#g5s)"/><path d="M0 0 H13 Q16 14 9 24 Q14 36 4 48 L0 50 Z" fill="#b4d44c"/><path d="M0 6 Q8 16 4 30 L0 34Z" fill="#8fbf2f"/><path d="M150 0 H137 Q134 10 141 18 Q136 30 144 40 Q140 50 150 56 Z" fill="#b7d650"/><path d="M150 8 Q142 20 147 34 L150 38Z" fill="#93c232"/><path d="M0 78 Q10 74 22 82 L22 122 H0Z" fill="#58b032"/><path d="M0 96 Q12 92 24 104 V122 H0Z" fill="#4aa02a"/><path d="M102 96 Q126 76 150 70 V122 H96 Z" fill="#56ae30"/><path d="M104 100 L150 78 M112 108 L150 92" stroke="#8fd060" stroke-width="1.3" fill="none" opacity=".8"/><rect x="0" y="108" width="150" height="14" fill="#58b032"/><path d="M0 116 Q40 108 80 118 T150 112 V122 H0Z" fill="#6cc23a"/><rect x="22" y="4" width="80" height="110" fill="#93c7a4"/><rect x="22" y="4" width="6.5" height="110" fill="#7fb594"/><rect x="30.5" y="7" width="69" height="104" fill="none" stroke="#a9d6b6" stroke-width=".8"/><rect x="22" y="112" width="80" height="3" fill="#5f8f72"/><text x="65.5" y="31.5" font-size="11.4" font-weight="bold" fill="#2f5a3c" text-anchor="middle" font-family="Liberation Sans, Noto Sans CJK SC, sans-serif" textLength="32" lengthAdjust="spacingAndGlyphs">昆虫记</text><rect x="51" y="13.5" width="29" height=".9" fill="#5f8a6c"/><rect x="52" y="37.5" width="28" height=".9" fill="#5f8a6c"/><rect x="61" y="40" width="10" height=".8" fill="#5f8a6c"/><circle cx="66" cy="67" r="19.4" fill="#7ccf4e"/><path d="M49.0,62.0 q10,-16 30,-6 q8,12 -4,26 q-16,6 -26,-6 z" fill="#5db838"/><path d="M54.0,56.0 q14,8 18,28" stroke="#b9ec8a" stroke-width="1.1" fill="none"/><ellipse cx="65" cy="66" rx="7.5" ry="5" fill="#2a2a22" transform="rotate(28 65 66)"/><circle cx="67" cy="68" r="2.2" fill="#e8c23a"/><circle cx="61.5" cy="62" r="2" fill="#c8a02a"/><rect x="47" y="89.5" width="38" height="1.2" fill="#4a7a5a"/><rect x="50" y="93" width="32" height=".8" fill="#6a9a7a"/><rect x="52" y="95.5" width="28" height=".8" fill="#6a9a7a"/><rect x="49" y="107" width="36" height="1" fill="#b0504a"/><circle cx="129.0" cy="42.0" r="10.4" fill="url(#g5p)"/><text x="129.0" y="45.1" font-size="8.4" font-weight="bold" fill="#ffee30" text-anchor="middle" font-family="Liberation Sans, Noto Sans CJK SC, sans-serif">科普</text><circle cx="121.8" cy="71.0" r="10.4" fill="url(#g5bl)"/><text x="121.8" y="74.1" font-size="8.4" font-weight="bold" fill="#ffee30" text-anchor="middle" font-family="Liberation Sans, Noto Sans CJK SC, sans-serif">绘本</text><circle cx="132.8" cy="96.0" r="10.4" fill="url(#g5r)"/><text x="132.8" y="99.1" font-size="8.4" font-weight="bold" fill="#ffee30" text-anchor="middle" font-family="Liberation Sans, Noto Sans CJK SC, sans-serif">插图</text><ellipse cx="133" cy="27" rx="5.5" ry="2.6" fill="#6a3d1c" transform="rotate(15 133 27)"/><ellipse cx="140" cy="25.5" rx="4" ry="2" fill="#d89a3a"/><path d="M130.0,25.0 l-2,-8 m6,8 l3,-7" stroke="#888" stroke-width=".8"/><ellipse cx="134" cy="62" rx="2.2" ry="4.6" fill="#4a2a1a"/><path d="M134.0,60.0 l7,-4 M134.0,60.0 l-7,-3" stroke="#e07a2a" stroke-width="1.6"/><ellipse cx="146" cy="102" rx="6" ry="2.4" fill="#6a5a3a" transform="rotate(25 146 102)"/><ellipse cx="140" cy="97" rx="4" ry="1.6" fill="#e8e8e0" transform="rotate(25 140 97)"/><ellipse cx="15" cy="90" rx="3.4" ry="1.8" fill="#3a3a2a"/><ellipse cx="12" cy="92" rx="2.4" ry="1.4" fill="#d8c060"/></svg><!--/IMG5--></td><td class="n p">36.0</td><td class="n">50</td><td class="n x">XX</td><td>吉林美术出版社</td><td></td><td class="c n">2021-03-09 01:51:07</td><td class="op">详情 编辑 删除</td></tr>
<tr style="height:160px"><td class="c b n">6</td><td class="n">2101011618260</td><td>我与地坛</td><td>文学</td><td class="im"><!--IMG6--><svg class="cv" style="top:13px" width="150" height="150" viewBox="0 0 150 150" ><defs><linearGradient id="g6a" x1="0" y1="0" x2="1" y2="1"><stop offset="0" stop-color="#ddd09e"/><stop offset=".5" stop-color="#e8dcae"/><stop offset="1" stop-color="#e3d6a6"/></linearGradient></defs><rect x="2" y="0" width="138" height="150" fill="#fff"/><rect x="2.5" y=".5" width="137" height="149" fill="none" stroke="#f6f6f6"/><polygon points="22.0,6.0 28.0,3.0 126.0,4.0 126.0,150.0 22.0,150.0" fill="url(#g6a)"/><polygon points="22.0,6.0 28.0,3.0 28.0,150.0 22.0,150.0" fill="#cbbd8a"/><rect x="23.5" y="14" width="2.4" height="12" fill="#8a7a52" opacity=".7"/><rect x="23.5" y="35" width="2.4" height="18" fill="#a8743a" opacity=".7"/><g fill="none" stroke="#2a2622" stroke-width="1.5"><path d="M63.5,17.5 h12 q1.6,0 1.4,2 l-.8,7 q-.5,3.4 -4,3.4 h-4 q-3.6,0 -4.4,-3.4 l-1.4,-6.6 q-.4,-2.4 1.2,-2.4z"/><path d="M82.5,17.5 h12 q1.6,0 1.2,2.4 l-1.4,6.6 q-.8,3.4 -4.4,3.4 h-4 q-3.5,0 -4,-3.4 l-.8,-7 q-.2,-2 1.4,-2z"/><path d="M77.0,20.0 q2.6,-1.6 5.2,0"/></g><text x="78.59999999999991" y="42.799999999999955" font-size="5.6" font-weight="bold" fill="#5a4630" text-anchor="middle" font-family="Liberation Serif, Noto Serif CJK SC, serif">史铁生 著</text><text x="78.59999999999991" y="62.299999999999955" font-size="14" font-weight="bold" fill="#5b3a1c" text-anchor="middle" font-family="Liberation Serif, Noto Serif CJK SC, serif" textLength="56" lengthAdjust="spacingAndGlyphs">我与地坛</text><path d="M34.0,83.0 h5 v-6 h4 v-3 l4,-2.5 l4,2.5 v4 h5 v6 h7 v-8 l3,-3 l3,3 v5 h4 q3,4 7,0 v-7 h4 v-3 l5,-3 l5,3 v6 h6 v5 h6 v-7 l3,-2 l3,2 v4 h5 v5 h5" fill="none" stroke="#e6a85a" stroke-width="1.2"/><rect x="28" y="97" width="98" height="60" fill="#fdfdfb"/><rect x="22" y="97" width="6" height="60" fill="#c9c9c4"/><circle cx="37.0" cy="104.5" r="1" fill="#e6b87a"/><circle cx="46.4" cy="104.5" r="1" fill="#e6b87a"/><circle cx="55.8" cy="104.5" r="1" fill="#e6b87a"/><circle cx="65.2" cy="104.5" r="1" fill="#e6b87a"/><circle cx="74.6" cy="104.5" r="1" fill="#e6b87a"/><circle cx="84.0" cy="104.5" r="1" fill="#e6b87a"/><circle cx="93.4" cy="104.5" r="1" fill="#e6b87a"/><circle cx="102.8" cy="104.5" r="1" fill="#e6b87a"/><circle cx="112.2" cy="104.5" r="1" fill="#e6b87a"/><circle cx="121.6" cy="104.5" r="1" fill="#e6b87a"/></svg><!--/IMG6--></td><td class="n p">33.0</td><td class="n">50</td><td class="n x">XX</td><td class="n x">XX</td><td></td><td class="c n">2021-03-09 01:30:39</td><td class="op">详情 编辑 删除</td></tr>
</tbody></table>
</body>
</html>
